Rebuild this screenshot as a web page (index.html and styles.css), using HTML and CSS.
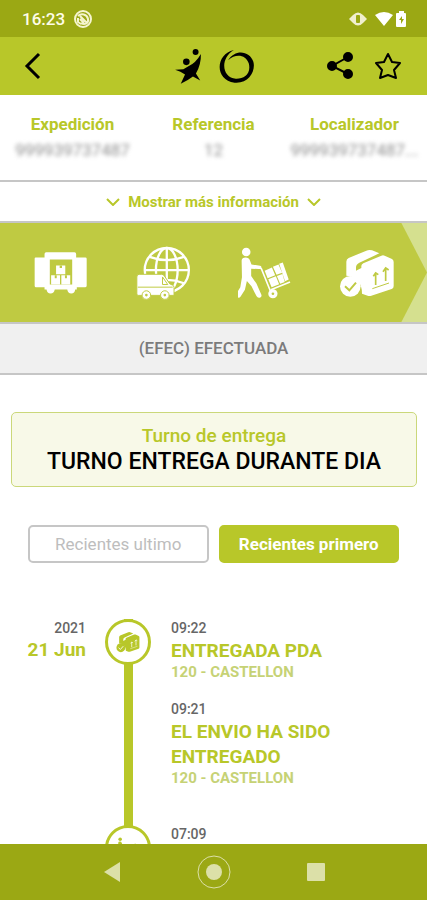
FILE: index.html
```html
<!DOCTYPE html>
<html lang="es">
<head>
<meta charset="utf-8">
<meta name="viewport" content="width=device-width, initial-scale=1">
<title>Detalle de la expedición</title>
<link rel="stylesheet" href="styles.css">
</head>
<body>
<svg class="sprite" aria-hidden="true">
  <symbol id="box" viewBox="380 92 168 152">
    <path fill="currentColor" d="M402 176V134q0-7 7-11L462 101q8-4 17-1l22 9-60 28q-10 5-10 14v10l16-8v-6q0-5 6-8l54-23q5-2 10 0l22 10q5 3 5 9v72q0 7-6 9l-61 20q-6 2-11 0l-17-6q0-50-47-54z"/>
    <path class="gap-line" stroke-width="3" d="M480 215l50-17"/>
    <path class="gap-line" stroke-width="5" d="M490 204v-34m-7 8l7-10 8 5M520 192v-37m-8 9l8-11 9 6"/>
    <circle fill="currentColor" cx="414" cy="208" r="31"/>
    <path class="gap-line" stroke-width="6" d="M398 208l13 12 20-23"/>
  </symbol>
  <symbol id="worker" viewBox="74 88 164 160">
    <circle fill="currentColor" cx="99" cy="104" r="13"/>
    <path fill="currentColor" d="M85 130q1-9 12-9 10 0 13 8l5 13 26 4q5 1 4 6-1 5-7 4l-24-1v22l16 23 15 34q2 7-5 9-6 2-10-5l-15-30-14-16-6 27-13 20q-4 6-10 3-7-4-3-11l12-20 5-30z"/>
    <path class="cart" d="M137 150l8 5 27 67M174 219l58-24"/>
    <path fill="currentColor" d="M155 161l22-10 10 24-23 9zM180 149l17-7 11 25-17 6zM199 140l11-4 18 52-11 5zM166 187l23-9 10 24-23 9zM192 177l17-6 7 24-14 6z"/>
    <circle fill="currentColor" cx="180" cy="231" r="14"/>
    <circle class="gap-fill" cx="180" cy="231" r="4"/>
  </symbol>
</svg>
<div class="app">
  <div class="status-bar">
    <time class="clock">16:23</time>
    <svg class="status-ring" viewBox="0 0 18 18" aria-hidden="true"><circle cx="9" cy="9" r="8"/><path d="M4 6c3-3 9-2 10 3s-4 6-7 4M4 8v4l3 2M6 6l7 7M6 9l4 4"/></svg>
    <svg class="status-icons" viewBox="0 0 58 18" aria-hidden="true">
      <path class="cream" d="M0 9l4-4q5-5 10 0l4 4-4 4q-5 5-10 0z"/>
      <rect class="bar" x="7" y="5" width="4" height="8" rx="1"/>
      <path class="white" d="M26 5q9-6 18 0l-9 11zM47 4q0-1 1-1h2V1h5v2h1q1 0 1 1v12q0 1-1 1h-8q-1 0-1-1z"/>
      <path class="bolt" d="M53 6l-3 4h2v4l3-5h-2z"/>
    </svg>
  </div>

  <header class="header">
    <button class="icon-button back-button" type="button" aria-label="Volver"><svg class="back" viewBox="0 0 18 28"><path d="M15 2L3 14l12 12"/></svg></button>
    <div class="brand">
      <svg class="brand-figure" viewBox="520 145 84 112" aria-hidden="true">
        <circle cx="585" cy="157" r="9"/><circle cx="557" cy="187" r="10"/>
        <path d="M523 211L548 209 562 201Q586 190 601 163 602 195 586 222L599 243 577 231Q560 244 540 253L553 225Q540 216 523 211z"/>
      </svg>
      <svg class="brand-ring" viewBox="18 146 108 108" aria-hidden="true">
        <path d="M64 149C8 160 2 242 66 250c44 4 66-36 58-65-10-32-55-42-78-4 24-22 55-17 64 10 8 33-16 48-40 47-42-3-51-62-6-89z"/>
      </svg>
    </div>
    <button class="icon-button share" type="button" aria-label="Compartir"><svg viewBox="0 0 28 28"><path d="M22 5L6 14l16 8"/><circle cx="22" cy="5" r="4"/><circle cx="6" cy="14" r="4"/><circle cx="22" cy="22" r="4"/></svg></button>
    <button class="icon-button star" type="button" aria-label="Favorito"><svg viewBox="0 0 28 28"><path d="M14 2l4 8 8 1-6 7 2 8-8-3-8 3 2-8-6-7 8-1z"/></svg></button>
  </header>

  <main class="content">
    <dl class="summary">
      <div><dt>Expedición</dt><dd>999939737487</dd></div>
      <div><dt>Referencia</dt><dd>12</dd></div>
      <div><dt>Localizador</dt><dd>999939737487...</dd></div>
    </dl>
    <button class="more" type="button">
      <svg viewBox="0 0 14 8" aria-hidden="true"><path d="M1 1l6 6 6-6"/></svg>
      Mostrar más información
      <svg viewBox="0 0 14 8" aria-hidden="true"><path d="M1 1l6 6 6-6"/></svg>
    </button>

    <div class="stages">
      <div class="stages-done">
        <svg viewBox="102 102 164 132" class="stage-truck" role="img" aria-label="Carga">
          <path fill="currentColor" d="M104 124q0-3 3-3h27v-11q0-5 5-5h86q5 0 5 5v11h28q4 0 4 4v82q0 4-4 4h-26v7h-5q-1 12-12 12-10 0-12-12h-38q-2 12-13 12-10 0-12-12h-6v-7h-27q-3 0-3-4z"/>
          <path class="gap-fill" d="M150 127h68v76h-68z"/>
          <path fill="currentColor" d="M169 145h28v27h-28zM154 175h27v28h-27zM185 175h27v28h-27z"/>
          <path class="gap-fill" d="M180 145h7v8h-7zM165 175h6v9h-6zM196 175h6v9h-6z"/>
        </svg>
        <svg viewBox="406 86 166 164" class="stage-globe" role="img" aria-label="En tránsito">
          <g class="globe"><circle cx="499" cy="159" r="67"/><ellipse cx="499" cy="159" rx="33" ry="67"/><path d="M499 92v134M432 159h134M447 119q52 20 104 0M447 199q52-20 104 0"/></g>
          <path class="van" d="M408 180q0-8 7-8h68q5 0 8 4l17 25 9 4q4 2 4 7v24h-14a14 14 0 0 1-28 0h-28a14 14 0 0 1-28 0h-11q-4 0-4-4z"/>
          <path class="gap-line" stroke-width="3" d="M411 211h106M486 180l16 23h-16z"/>
          <g class="wheel"><circle cx="437" cy="235" r="13"/><circle cx="493" cy="235" r="13"/></g>
          <circle class="gap-fill" cx="437" cy="235" r="4"/><circle class="gap-fill" cx="493" cy="235" r="4"/>
        </svg>
        <svg class="stage-worker" role="img" aria-label="En reparto"><use href="#worker"/></svg>
        <svg class="stage-box" role="img" aria-label="Entregado"><use href="#box"/></svg>
      </div>
    </div>
    <p class="state">(EFEC) EFECTUADA</p>

    <section class="shift">
      <h2>Turno de entrega</h2>
      <p>TURNO ENTREGA DURANTE DIA</p>
    </section>

    <div class="sort">
      <button class="sort-button" type="button">Recientes ultimo</button>
      <button class="sort-button selected" type="button">Recientes primero</button>
    </div>

    <ol class="timeline">
      <li class="day">
        <div class="date"><span class="small">2021</span><strong>21 Jun</strong></div>
        <div class="rail"><span class="node"><svg class="node-box" aria-hidden="true"><use href="#box"/></svg></span></div>
        <div class="events">
          <article class="event"><time class="small">09:22</time><h3>ENTREGADA PDA</h3><p>120 - CASTELLON</p></article>
          <article class="event"><time class="small">09:21</time><h3>EL ENVIO HA SIDO ENTREGADO</h3><p>120 - CASTELLON</p></article>
        </div>
      </li>
      <li class="day">
        <div class="date"></div>
        <div class="rail"><span class="node"><svg class="node-box" aria-hidden="true"><use href="#worker"/></svg></span></div>
        <div class="events"><article class="event"><time class="small">07:09</time></article></div>
      </li>
    </ol>
  </main>

  <nav class="system-nav" aria-label="Sistema">
    <button type="button" aria-label="Atrás"><svg viewBox="0 0 36 36"><path d="M10 18l16-10v20z"/></svg></button>
    <button type="button" aria-label="Inicio"><svg viewBox="0 0 36 36"><circle class="ring" cx="18" cy="18" r="16"/><circle cx="18" cy="18" r="8"/></svg></button>
    <button type="button" aria-label="Aplicaciones"><svg viewBox="0 0 36 36"><rect x="9" y="9" width="18" height="18" rx="1"/></svg></button>
  </nav>
</div>
</body>
</html>
```
FILE: styles.css
```css
:root {
  --green: #b8c729;
  --band: #bfca42;
  --dark: #9ba814;
  --line: #c6c6c6;
  --gap: var(--band);
}
* { box-sizing: border-box; }
body { margin: 0; font-family: Roboto, "Liberation Sans", sans-serif; background: #fff; }
p, h2, h3, dl, dd, ol { margin: 0; padding: 0; }
button { font: inherit; border: 0; background: none; padding: 0; color: inherit; cursor: pointer; }
svg { display: block; }
.sprite { display: none; }
.app { display: flex; flex-direction: column; height: 100vh; }

.gap-line { fill: none; stroke: var(--gap); }
.gap-fill { fill: var(--gap); }

.status-bar { display: flex; align-items: center; flex: none; height: 37px; padding: 0 20px 0 22px; background: var(--dark); color: #fffde8; }
.clock { font-size: 17px; font-weight: 500; }
.status-ring { width: 18px; height: 18px; margin-left: 9px; fill: none; stroke: #f6f5cf; stroke-width: 2; }
.status-icons { width: 58px; height: 18px; margin-left: auto; }
.cream { fill: #f0efce; }
.white { fill: #fff; }
.bar, .bolt { fill: var(--dark); }

.header { display: flex; align-items: center; flex: none; height: 58px; padding: 0 25px 0 24px; background: var(--green); }
.icon-button { display: flex; align-items: center; justify-content: center; width: 28px; height: 40px; }
.icon-button svg { width: 28px; height: 28px; fill: none; stroke: #000; }
.back-button { justify-content: flex-start; }
.icon-button .back { width: 18px; stroke-width: 3; }
.share svg { stroke-width: 2; }
.share circle { fill: #000; }
.star { margin-left: 20px; }
.star svg { stroke-width: 2; stroke-linejoin: round; }
.brand { display: flex; align-items: center; justify-content: center; gap: 17px; flex: 1; padding: 0 16px 0 66px; }
.brand-figure { width: 28px; height: 37px; }
.brand-ring { width: 35px; height: 35px; }

.content { flex: 1; min-height: 0; overflow: hidden; }
.summary { display: grid; grid-template-columns: repeat(3, 1fr); height: 87px; padding: 18px 2px 0; border-bottom: 2px solid var(--line); text-align: center; }
.summary dt { color: var(--green); font-size: 17px; font-weight: 700; line-height: 22px; }
.summary dd { color: #909090; font-size: 17px; line-height: 30px; filter: blur(2px); }
.more { display: flex; align-items: center; justify-content: center; gap: 8px; width: 100%; height: 39px; color: var(--green); font-size: 15px; font-weight: 700; }
.more svg { width: 14px; height: 8px; fill: none; stroke: currentColor; stroke-width: 2; }

.stages { background: #d5e08f; border-top: 2px solid var(--line); border-bottom: 2px solid var(--line); }
.stages-done { display: grid; grid-template-columns: repeat(4, 1fr); align-items: center; justify-items: center; height: 99px; padding: 0 9px 0 10px; background: var(--band); color: #fff; clip-path: polygon(0 0, 94% 0, 100% 50%, 94% 100%, 0 100%); }
.stage-truck { width: 54px; height: 44px; }
.stage-globe { width: 55px; height: 54px; }
.stage-worker { width: 54px; height: 54px; }
.stage-box { width: 56px; height: 52px; }
.cart { fill: none; stroke: currentColor; stroke-width: 5; }
.globe { fill: none; stroke: #fff; stroke-width: 7; }
.van, .wheel { fill: #fff; stroke: var(--band); stroke-width: 3; }

.state { height: 51px; border-bottom: 2px solid var(--line); background: #f0f0f0; color: #7b7b7b; font-size: 17px; font-weight: 500; line-height: 48px; text-align: center; }

.shift { margin: 37px 10px 0 11px; padding: 11px 8px 10px; border: 1px solid #cbd87a; border-radius: 5px; background: #f8f9e8; text-align: center; }
.shift h2 { color: var(--green); font-size: 19px; font-weight: 500; line-height: 24px; }
.shift p { color: #000; font-size: 23px; font-weight: 500; line-height: 28px; }

.sort { display: grid; grid-template-columns: 1fr 1fr; gap: 10px; margin: 38px 28px 0; }
.sort-button { height: 38px; border: 2px solid var(--line); border-radius: 5px; color: #bdbdbd; font-size: 17px; }
.selected { border-color: var(--green); background: var(--green); color: #fff; font-weight: 700; }

.timeline { margin-top: 56px; list-style: none; }
.day { display: grid; grid-template-columns: 86px 84px 1fr; }
.small { display: block; color: #666; font-size: 14px; font-weight: 500; line-height: 19px; }
.date { text-align: right; }
.date strong { display: block; color: var(--green); font-size: 19px; font-weight: 700; line-height: 24px; }
.rail { display: flex; justify-content: center; background: linear-gradient(var(--green), var(--green)) center / 9px 100% no-repeat; }
.node { display: flex; align-items: center; justify-content: center; width: 46px; height: 46px; border: 3px solid var(--green); border-radius: 50%; background: #fff; color: var(--green); --gap: #fff; }
.node-box { width: 24px; height: 22px; }
.events { padding: 0 60px 19px 1px; }
.event { padding-bottom: 19px; }
.event h3 { color: var(--green); font-size: 19px; font-weight: 700; line-height: 25px; }
.event p { color: #c6d275; font-size: 15px; font-weight: 700; line-height: 18px; }

.system-nav { display: flex; align-items: center; justify-content: center; gap: 66px; flex: none; height: 56px; background: var(--dark); }
.system-nav svg { width: 36px; height: 36px; fill: #dce0a8; }
.system-nav .ring { fill: none; stroke: #dce0a8; stroke-width: 1; }
```
